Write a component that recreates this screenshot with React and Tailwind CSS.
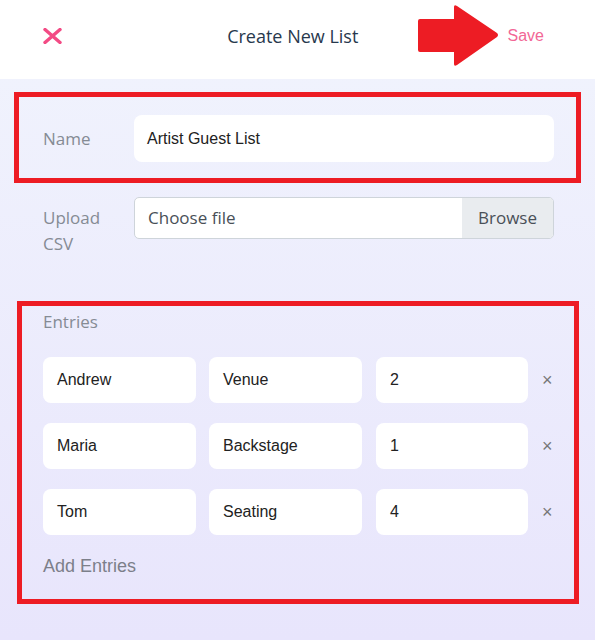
import React, { useState } from "react";

const ArrowMark = () => (
  <svg
    className="absolute left-[416px] top-[3px]"
    width="86"
    height="66"
    viewBox="416 3 86 66"
  >
    <path
      d="M420 19 L454 19 L454 7 Q454 4 457 6 L497 33 Q499 35 497 37 L457 65 Q454 67 454 64 L454 52 L420 52 Q418 52 418 50 L418 21 Q418 19 420 19 Z"
      fill="#ed1c24"
    />
  </svg>
);

const cell =
  "h-[46px] bg-white rounded-lg flex items-center pl-[14px] text-[16px] text-[#222] font-['Liberation_Sans',Arial,sans-serif]";

const EntryRow = ({ entry, onRemove }) => (
  <div className="flex items-center">
    <div className={`${cell} w-[153px]`}>{entry.name}</div>
    <div className={`${cell} w-[153px] ml-[13px]`}>{entry.area}</div>
    <div className={`${cell} w-[152px] ml-[14px]`}>{entry.count}</div>
    <button
      onClick={onRemove}
      className="ml-[14px] text-[#777] text-[18px] leading-none font-['Liberation_Sans',Arial,sans-serif]"
    >
      ×
    </button>
  </div>
);

export default function App() {
  const [entries, setEntries] = useState([
    { name: "Andrew", area: "Venue", count: "2" },
    { name: "Maria", area: "Backstage", count: "1" },
    { name: "Tom", area: "Seating", count: "4" },
  ]);

  return (
    <div className="min-h-screen bg-gradient-to-b from-[#f1f4fd] to-[#e8e5fc]">
      {/* header */}
      <div className="relative h-[79px] bg-white flex items-center px-[43px] pb-[7px]">
        <svg width="19" height="16" viewBox="0 0 19 16">
          <path
            d="M2 1.5 L17 14.5 M17 1.5 L2 14.5"
            stroke="#f34b85"
            strokeWidth="3.4"
            strokeLinecap="round"
          />
        </svg>
        <div className="flex-1 text-center text-[18px] text-[#27384d] pl-[16px] font-['Open_Sans','Noto_Sans',sans-serif]">
          Create New List
        </div>
        <ArrowMark />
        <button className="relative text-[16px] text-[#f26796] mr-[8px] font-['Liberation_Sans',Arial,sans-serif]">
          Save
        </button>
      </div>

      <div className="px-[14px] pt-[13px] pb-[36px]">
        {/* name */}
        <div className="border-[5px] border-[#ed1c24] flex items-center pl-[24px] pr-[22px] pt-[18px] pb-[16px]">
          <div className="w-[91px] text-[17px] text-[#858b94] font-['Open_Sans','Noto_Sans',sans-serif]">
            Name
          </div>
          <div className="flex-1 h-[47px] bg-white rounded-lg flex items-center pl-[13px] text-[16px] text-[#222] font-['Liberation_Sans',Arial,sans-serif]">
            Artist Guest List
          </div>
        </div>

        {/* upload */}
        <div className="flex items-start mt-[14px] pl-[29px] pr-[27px]">
          <div className="w-[91px] pt-[8px] text-[17px] leading-[26px] text-[#858b94] font-['Open_Sans','Noto_Sans',sans-serif]">
            Upload
            <br />
            CSV
          </div>
          <div className="flex-1 h-[42px] flex rounded-[5px] border border-[#ced4da] bg-white overflow-hidden font-['Open_Sans','Noto_Sans',sans-serif]">
            <div className="flex-1 flex items-center pl-[13px] text-[17px] text-[#495057]">
              Choose file
            </div>
            <div className="w-[91px] bg-[#e9ecef] flex items-center justify-center text-[17px] text-[#495057]">
              Browse
            </div>
          </div>
        </div>

        {/* entries */}
        <div className="mt-[44px] ml-[3px] mr-[2px] border-[5px] border-[#ed1c24] pl-[21px] pr-[20px] pt-[4px] pb-[21px]">
          <div className="text-[17px] leading-[24px] text-[#858b94] font-['Open_Sans','Noto_Sans',sans-serif]">
            Entries
          </div>
          <div className="mt-[23px] flex flex-col gap-[20px]">
            {entries.map((entry, i) => (
              <EntryRow
                key={i}
                entry={entry}
                onRemove={() => setEntries(entries.filter((_, j) => j !== i))}
              />
            ))}
          </div>
          <div className="mt-[19px] text-[18px] leading-[24px] text-[#7c7f8a] font-['Liberation_Sans',Arial,sans-serif]">
            Add Entries
          </div>
        </div>
      </div>
    </div>
  );
}
